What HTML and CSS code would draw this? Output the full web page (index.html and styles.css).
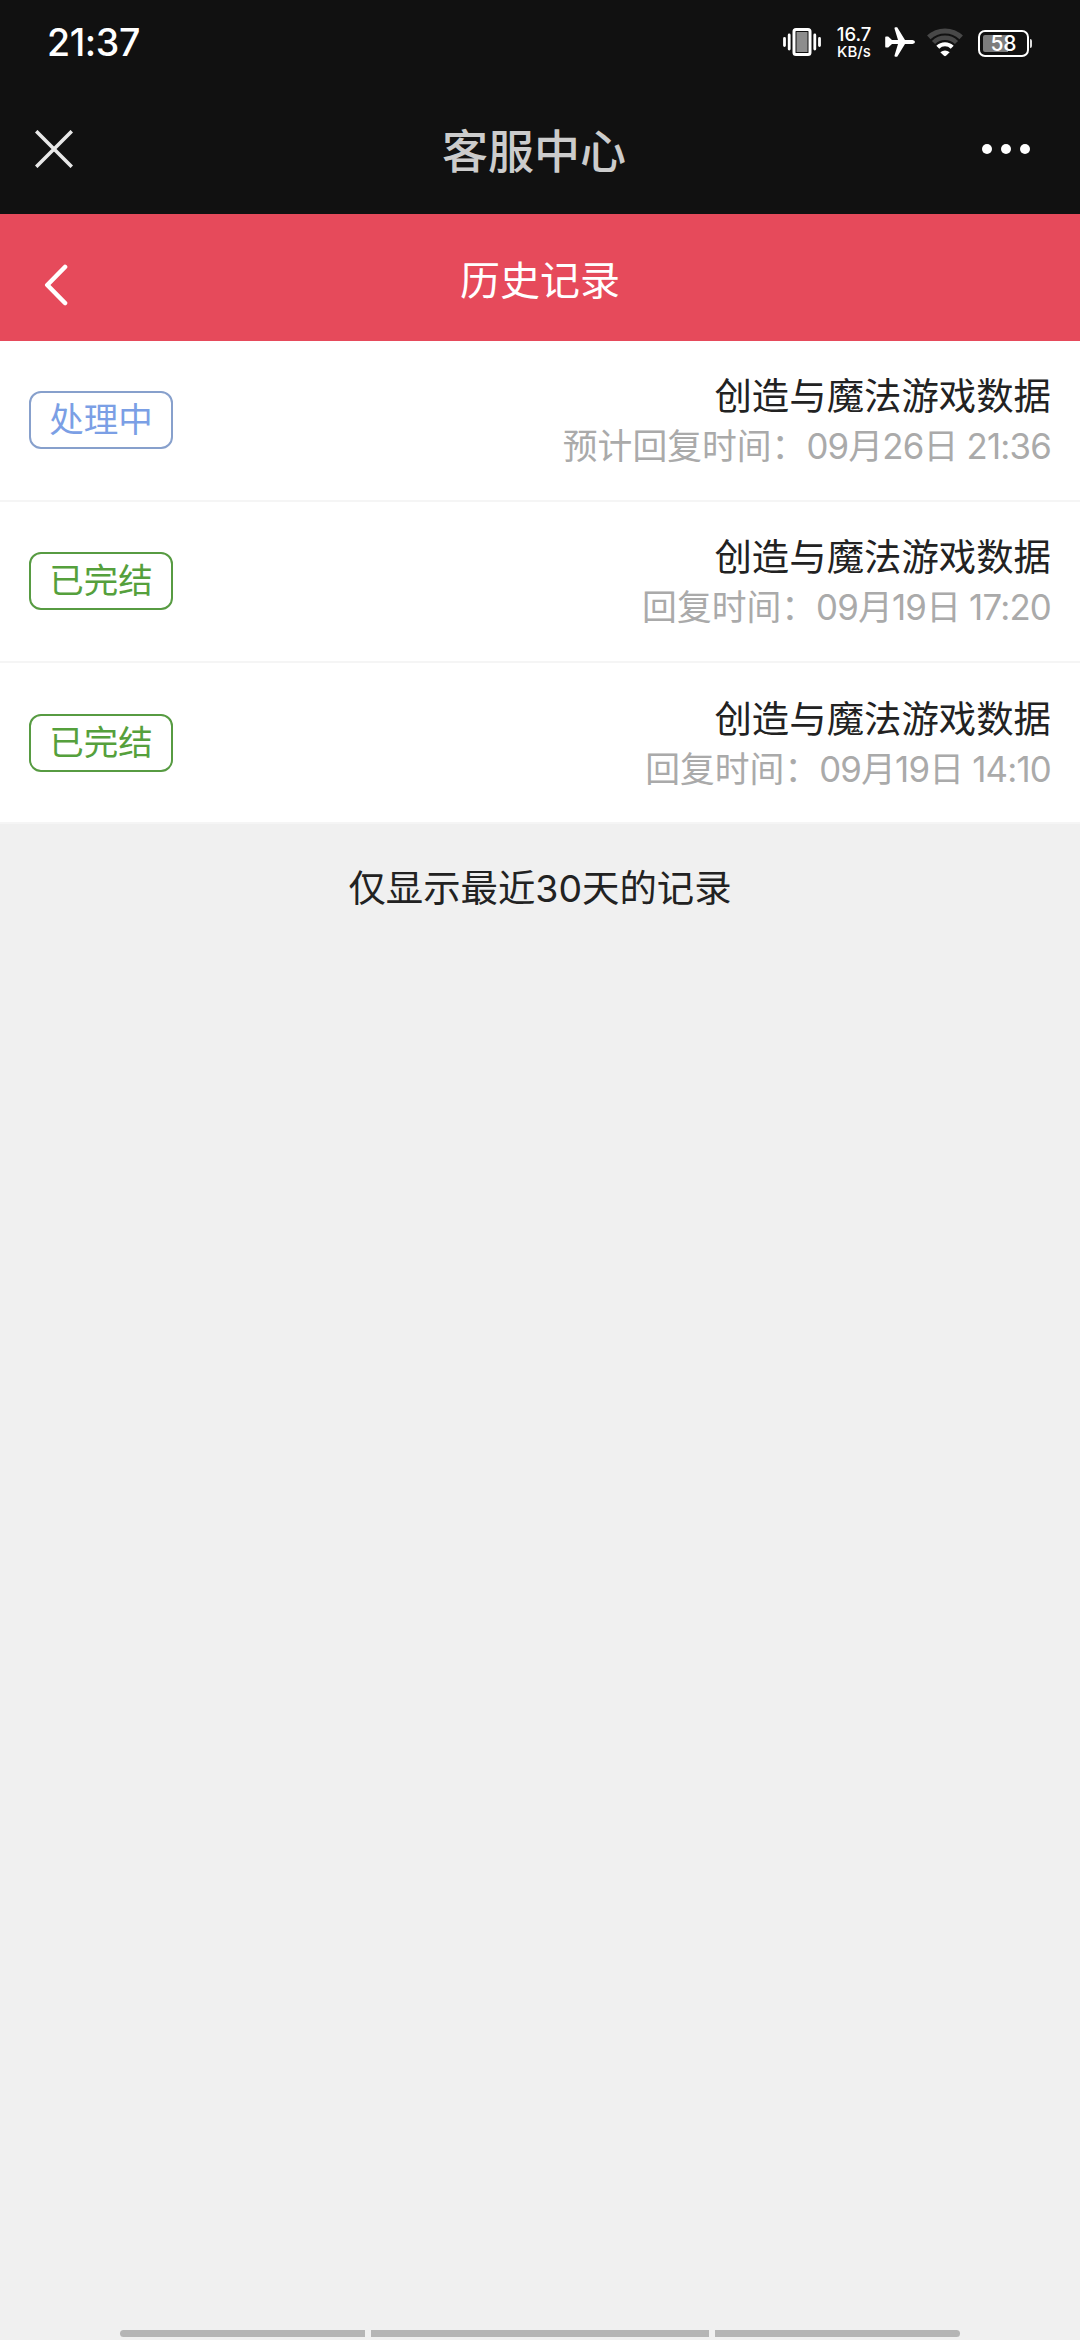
FILE: index.html
```html
<!DOCTYPE html>
<html lang="zh-CN">

<head>
    <meta charset="UTF-8">
    <meta name="viewport" content="width=device-width, initial-scale=1.0">
    <title>客服中心</title>
    <link rel="stylesheet" href="styles.css">
</head>

<body>
    <!-- Status bar -->
    <div class="status-bar">
        <span class="clock">21:37</span>
        <div class="status-icons">
            <svg class="icon-vibrate" width="38" height="28" viewBox="0 0 38 28">
                <rect x="11" y="1.5" width="16" height="25" rx="2" fill="none" stroke="#fff" stroke-width="3" />
                <rect x="13.5" y="4" width="11" height="20" fill="#8d8d8d" />
                <path d="M1.5 10.5v7M6.2 7v14M31.8 7v14M36.5 10.5v7" fill="none" stroke="#fff" stroke-width="2.8" stroke-linecap="round" />
            </svg>
            <div class="net-speed">
                <span class="speed-value">16.7</span>
                <span class="speed-unit">KB/s</span>
            </div>
            <svg class="icon-plane" width="30" height="30" viewBox="0 0 30 30">
                <path d="M1 9.5h2.2L7 13h6L9.5 1.5Q9.400 .2 10.500 .2h1.700L20 13h7.500Q30 13.300 30 15T27.500 17H20L12.200 29.800H10.500Q9.400 29.800 9.500 28.500L13 17H7l-3.800 3.500H1Q.2 20.500 .2 19.500v-9Q.2 9.500 1 9.500z" fill="#fff" />
            </svg>
            <svg class="icon-wifi" width="36" height="29" viewBox="0 0 36 29">
                <path d="M1.800 9.400A23.500 23.500 0 0 1 34.200 9.400" fill="none" stroke="#484848" stroke-width="5" />
                <path d="M6.500 14.500A16.500 16.500 0 0 1 29.500 14.500" fill="none" stroke="#484848" stroke-width="4.500" />
                <path d="M10.800 19.200A10.300 10.300 0 0 1 25.200 19.200" fill="none" stroke="#fff" stroke-width="4.200" />
                <path d="M13.300 24.200Q18 20.600 22.700 24.200L19 27.800Q18 28.600 17 27.800z" fill="#fff" />
            </svg>
            <div class="battery">
                <span class="battery-level"></span>
                <span class="battery-text">58</span>
            </div>
            <span class="battery-cap"></span>
        </div>
    </div>

    <!-- App title bar -->
    <div class="app-bar">
        <svg class="icon-close" width="38" height="38" viewBox="0 0 38 38">
            <path d="M1.200 1.200l35.600 35.600M36.800 1.200L1.200 36.800" fill="none" stroke="#e8e8e8" stroke-width="3.600" />
        </svg>
        <h1>客服中心</h1>
        <div class="more">
            <i></i><i></i><i></i>
        </div>
    </div>

    <!-- Page header -->
    <div class="page-header">
        <svg class="icon-back" width="24" height="42" viewBox="0 0 24 42">
            <path d="M21 3L3.300 21L21 39" fill="none" stroke="#fff" stroke-width="4.600" stroke-linecap="round" stroke-linejoin="round" />
        </svg>
        <h2>历史记录</h2>
    </div>

    <!-- Records -->
    <div class="record-list">
        <div class="record">
            <span class="badge pending">处理中</span>
            <div class="record-info">
                <p class="record-title">创造与魔法游戏数据</p>
                <p class="record-time">预计回复时间：<span>09月26日 21:36</span></p>
            </div>
        </div>
        <div class="record">
            <span class="badge done">已完结</span>
            <div class="record-info">
                <p class="record-title">创造与魔法游戏数据</p>
                <p class="record-time">回复时间：<span>09月19日 17:20</span></p>
            </div>
        </div>
        <div class="record">
            <span class="badge done">已完结</span>
            <div class="record-info">
                <p class="record-title">创造与魔法游戏数据</p>
                <p class="record-time">回复时间：<span>09月19日 14:10</span></p>
            </div>
        </div>
    </div>
    <p class="tips">仅显示最近30天的记录</p>

    <!-- Gesture bar -->
    <div class="gesture-bar">
        <i class="side left"></i>
        <i class="middle"></i>
        <i class="side right"></i>
    </div>
</body>

</html>
```
FILE: styles.css
```css
/* General Styling */
* {
    box-sizing: border-box;
}

body {
    font-family: Inter, "Noto Sans CJK SC", sans-serif;
    margin: 0;
    min-height: 2340px;
    background: #f0f0f0;
    color: #222;
    display: flex;
    flex-direction: column;
}

h1,
h2,
p {
    margin: 0;
}

svg {
    display: block;
}

/* Status bar */
.status-bar {
    height: 84px;
    padding: 0 48px 0 47px;
    background: #111;
    color: #fff;
    display: flex;
    justify-content: space-between;
    align-items: center;
}

.clock {
    font-size: 37.5px;
    font-weight: 500;
    letter-spacing: -0.4px;
}

.status-icons {
    display: flex;
    align-items: center;
}

.net-speed {
    width: 36px;
    margin: 1px 0 0 15px;
    display: flex;
    flex-direction: column;
    align-items: center;
    font-weight: 500;
    white-space: nowrap;
}

.speed-value {
    font-size: 18.5px;
    line-height: 17px;
}

.speed-unit {
    font-size: 15px;
    line-height: 17px;
}

.icon-plane {
    margin-left: 13px;
}

.icon-wifi {
    margin-left: 12px;
}

.battery {
    position: relative;
    width: 51px;
    height: 27px;
    margin: 3px 0 0 15px;
    padding: 3px;
    border: 2px solid #fff;
    border-radius: 7px;
}

.battery-level {
    display: block;
    width: 25px;
    height: 17px;
    border-radius: 2px 0 0 2px;
    background: #7d7d7d;
}

.battery-text {
    position: absolute;
    inset: 0;
    font-size: 21px;
    font-weight: 500;
    line-height: 24px;
    text-align: center;
}

.battery-cap {
    width: 2px;
    height: 9px;
    margin: 2px 0 0 1px;
    background: #ddd;
    border-radius: 0 2px 2px 0;
}

/* App title bar */
.app-bar {
    height: 130px;
    padding: 0 50px 0 35px;
    background: #111;
    display: flex;
    justify-content: space-between;
    align-items: center;
}

.app-bar h1 {
    margin-left: 13px;
    padding-top: 3px;
    color: #ccc;
    font-size: 46px;
    font-weight: 500;
    line-height: 66px;
}

.more {
    display: flex;
    gap: 9px;
}

.more i {
    width: 10px;
    height: 10px;
    border-radius: 50%;
    background: #fff;
}

/* Page header */
.page-header {
    height: 126.6px;
    padding: 0 44px;
    background: #e64a5b;
    display: grid;
    grid-template-columns: 24px 1fr 24px;
    align-items: center;
}

.icon-back {
    margin-top: 15px;
}

.page-header h2 {
    padding-top: 2px;
    color: #fff;
    font-size: 40px;
    font-weight: 400;
    text-align: center;
}

/* Records */
.record-list {
    background: #fff;
}

.record {
    height: 161.2px;
    padding: 0 29px;
    border-bottom: 2px solid #f5f5f5;
    display: flex;
    justify-content: space-between;
    align-items: center;
}

.badge {
    width: 144px;
    height: 58px;
    border: 2px solid;
    border-radius: 12px;
    font-size: 34.5px;
    line-height: 53px;
    text-align: center;
}

.pending {
    color: #7b9fe5;
    border-color: #87a0cc;
}

.done {
    color: #55a03c;
    border-color: #579b42;
}

.record-info {
    text-align: right;
}

.record-title {
    font-size: 37.4px;
    line-height: 52px;
}

.record-time {
    color: #aaa;
    font-size: 34.8px;
    line-height: 46px;
}

.record-time span {
    letter-spacing: -0.8px;
}

.tips {
    margin-top: 39px;
    font-size: 37.4px;
    line-height: 52px;
    text-align: center;
}

/* Gesture bar */
.gesture-bar {
    margin-top: auto;
    padding: 0 120px 3px;
    display: flex;
    gap: 6px;
}

.gesture-bar i {
    height: 7px;
    background: #b5b5b5;
}

.side {
    width: 245px;
}

.middle {
    flex: 1;
}

.left {
    border-radius: 4px 0 0 4px;
}

.right {
    border-radius: 0 4px 4px 0;
}
```
